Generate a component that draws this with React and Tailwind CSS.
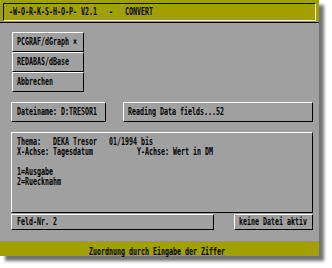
import React from "react";

const T = ({ children }) => (
  <span className="inline-block whitespace-pre origin-left scale-x-[0.604]">{children}</span>
);

const boxCls =
  "border border-t-white border-l-white border-b-black border-r-black";

export default function App() {
  return (
    <div className="w-[332px] h-[268px] bg-white overflow-hidden font-['DejaVu_Sans_Mono','Liberation_Mono',monospace] font-bold text-[11px] leading-[10px] text-black">
      <div className="w-[319px] h-[256px] bg-[#a0a0a0] flex flex-col shadow-[5px_5px_3px_rgba(0,0,0,0.55)]">
        {/* Title bar */}
        <div className="h-[23px] bg-[#a0a000] border-b border-black pt-[3px] px-[3px]">
          <div className="h-[18px] border border-t-black border-l-black border-b-[#f4f4b0] border-r-[#f4f4b0] flex items-center pl-[5px]">
            <T>-W-O-R-K-S-H-O-P- V2.1   -   CONVERT</T>
          </div>
        </div>

        {/* Body */}
        <div className="flex-1 pl-[11px] pr-[6px] pt-[9px] flex flex-col">
          <div className="ml-[1px] w-[72px] flex flex-col">
            <div className={"h-[20px] flex items-center pl-[4px] " + boxCls}>
              <T>PCGRAF/dGraph ×</T>
            </div>
            <div className={"h-[20px] flex items-center pl-[4px] " + boxCls}>
              <T>REDABAS/dBase</T>
            </div>
            <div className={"h-[20px] flex items-center pl-[4px] " + boxCls}>
              <T>Abbrechen</T>
            </div>
          </div>

          <div className="mt-[10px] flex h-[20px]">
            <div className={"w-[95px] flex items-center pl-[5px] " + boxCls}>
              <T>Dateiname: D:TRESOR1</T>
            </div>
            <div className={"flex-1 ml-[17px] flex items-center pl-[4px] " + boxCls}>
              <T>Reading Data fields...52</T>
            </div>
          </div>

          <div className={"mt-[10px] h-[81px] pt-[4px] pl-[5px] flex flex-col " + boxCls}>
            <T>Thema:   DEKA Tresor   01/1994 bis</T>
            <T>X-Achse: Tagesdatum           Y-Achse: Wert in DM</T>
            <T> </T>
            <T>1=Ausgabe</T>
            <T>2=Ruecknahm</T>
          </div>

          <div className="mt-[1px] flex h-[16px]">
            <div className={"w-[203px] flex items-center pl-[5px] " + boxCls}>
              <T>Feld-Nr. 2</T>
            </div>
            <div className={"ml-auto w-[79px] flex items-center pl-[4px] " + boxCls}>
              <T>keine Datei aktiv</T>
            </div>
          </div>
        </div>

        {/* Status bar */}
        <div className="h-[15px] bg-[#a0a000] pl-[89px] pt-[6px]">
          <T>Zuordnung durch Eingabe der Ziffer</T>
        </div>
      </div>
    </div>
  );
}
